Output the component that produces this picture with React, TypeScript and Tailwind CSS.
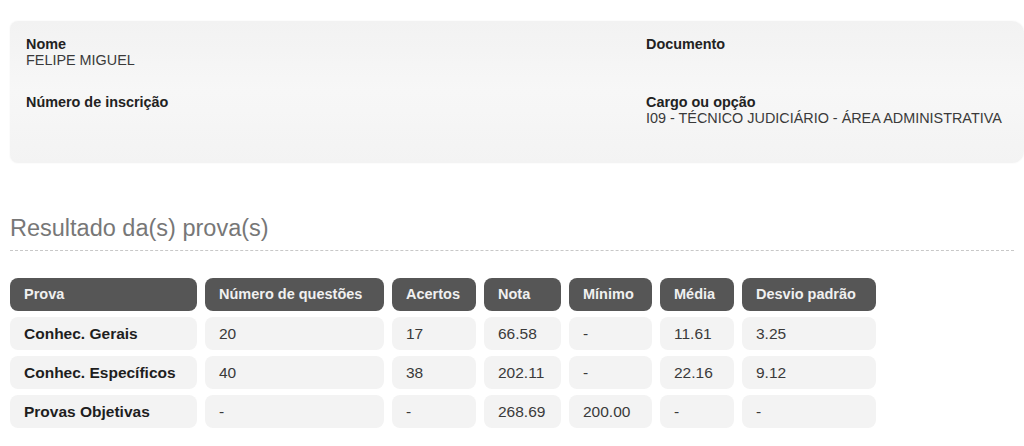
const rows = [
  ['Conhec. Gerais', '20', '17', '66.58', '-', '11.61', '3.25'],
  ['Conhec. Específicos', '40', '38', '202.11', '-', '22.16', '9.12'],
  ['Provas Objetivas', '-', '-', '268.69', '200.00', '-', '-'],
];

const headers = ['Prova', 'Número de questões', 'Acertos', 'Nota', 'Mínimo', 'Média', 'Desvio padrão'];

function Field({ label, value }: { label: string; value?: string }) {
  return (
    <div className="h-[58px] leading-[16px]">
      <div className="text-[14.4px] font-bold text-[#222]">{label}</div>
      {value && <div className="text-[14.4px] text-[#3a3a3a]">{value}</div>}
    </div>
  );
}

export default function App() {
  return (
    <div className="h-[446px] w-[1024px] overflow-hidden bg-white font-['Liberation_Sans',Arial,sans-serif]">
      <div className="pl-[10px] pt-[21px]">
        <div className="h-[142px] rounded-l-lg rounded-r-xl bg-gradient-to-b from-[#f2f2f2] via-[#f7f7f7] to-[#f3f3f3] pl-[16px] pt-[15px] shadow-[0_0_2px_rgba(0,0,0,0.06)]">
          <div className="grid grid-cols-[620px_1fr]">
            <Field label="Nome" value="FELIPE MIGUEL" />
            <Field label="Documento" />
            <Field label="Número de inscrição" />
            <Field label="Cargo ou opção" value="I09 - TÉCNICO JUDICIÁRIO - ÁREA ADMINISTRATIVA" />
          </div>
        </div>
      </div>

      <div className="px-[10px] pt-[51px]">
        <h2 className="text-[23.5px] leading-[28px] text-[#777]">Resultado da(s) prova(s)</h2>
        <div className="mt-[8px] border-t border-dashed border-[#c8c8c8]" />

        <div className="mt-[27px] grid grid-cols-[187px_179px_84px_77px_83px_74px_134px] gap-x-2 gap-y-[6px]">
          {headers.map((h) => (
            <div
              key={h}
              className="flex h-[33px] items-center rounded-lg bg-[#565656] pl-[14px] text-[14.5px] font-bold text-[#f0f0f0]"
            >
              {h}
            </div>
          ))}
          {rows.map((r) =>
            r.map((c, i) => (
              <div
                key={r[0] + i}
                className={
                  i === 0
                    ? 'flex h-[33px] items-center rounded-lg bg-[#f3f3f3] pl-[14px] text-[15.5px] font-bold text-[#1e1e1e]'
                    : 'flex h-[33px] items-center rounded-lg bg-[#f3f3f3] pl-[14px] text-[15.5px] text-[#3a3a3a]'
                }
              >
                {c}
              </div>
            ))
          )}
        </div>
      </div>
    </div>
  );
}
